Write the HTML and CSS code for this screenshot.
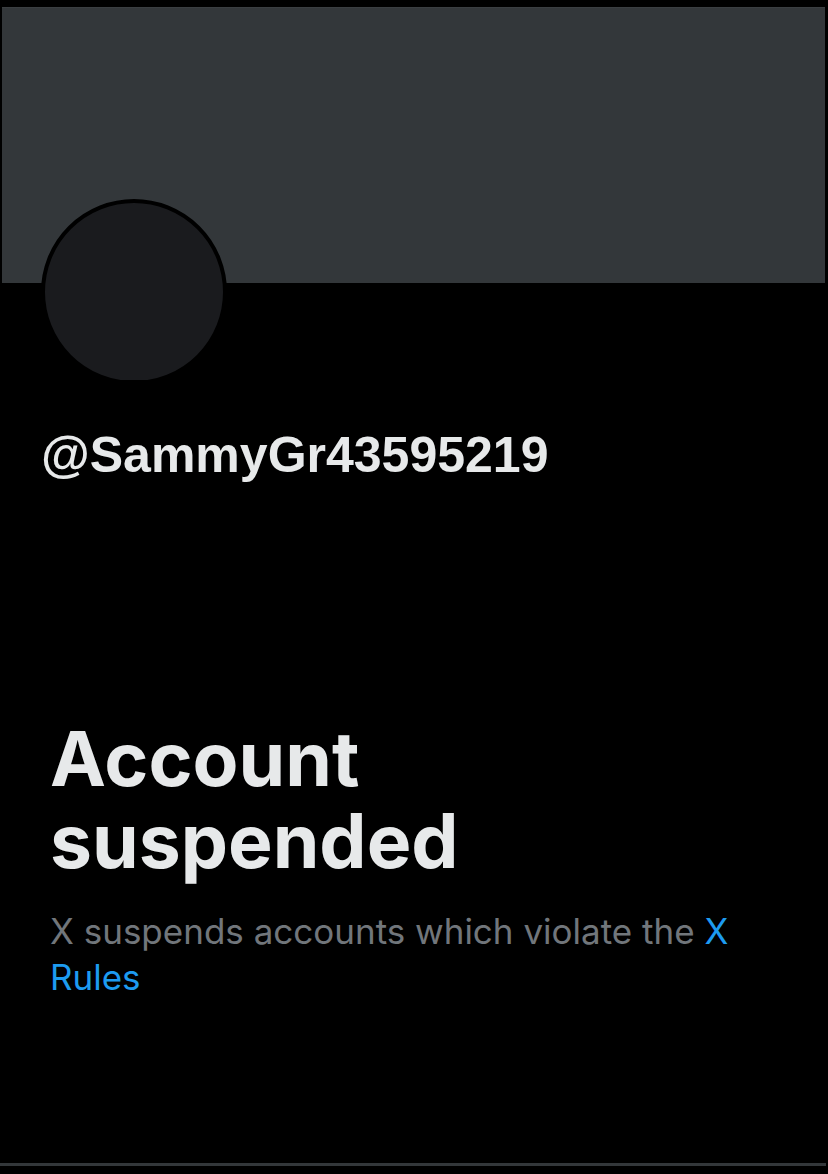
FILE: index.html
```html
<!DOCTYPE html>
<html lang="en">
<head>
<meta charset="utf-8">
<title>@SammyGr43595219</title>
<link rel="stylesheet" href="styles.css">
</head>
<body>
<div class="page">
  <div class="banner"></div>
  <div class="avatar-wrap">
    <div class="avatar"></div>
  </div>
  <div class="handle">@SammyGr43595219</div>
  <section class="notice">
    <h1 class="notice-title">Account suspended</h1>
    <p class="notice-text">X suspends accounts which violate the <a class="notice-link" href="#">X Rules</a></p>
  </section>
  <div class="bottom-rule"></div>
</div>
</body>
</html>
```

FILE: styles.css
```css
html, body {
  margin: 0;
  padding: 0;
  background: #000;
}

.page {
  width: 828px;
  height: 1174px;
  overflow: hidden;
  font-family: Inter, "Liberation Sans", sans-serif;
}

.banner {
  margin: 7px 0 0 2px;
  width: 823px;
  height: 276px;
  background: #33373a;
  border-top: 1px solid #3a3e41;
  box-sizing: border-box;
}

.avatar-wrap {
  margin: -84px 0 0 41px;
  width: 186px;
  height: 181px;
  overflow: hidden;
}

.avatar {
  width: 186px;
  height: 186px;
  border-radius: 50%;
  box-sizing: border-box;
  border: 4px solid #000;
  background: #1a1b1e;
}

.handle {
  margin-top: 45px;
  padding-left: 41px;
  font-family: "Liberation Sans", Arial, sans-serif;
  font-size: 50px;
  line-height: 60px;
  font-weight: 700;
  color: #e7e9ea;
}

.notice {
  margin-top: 233px;
  padding: 0 50px;
}

.notice-title {
  margin: 0;
  font-size: 75px;
  line-height: 82px;
  font-weight: 700;
  color: #e7e9ea;
  width: 520px;
}

.notice-text {
  margin: 26px 0 0;
  font-size: 35px;
  line-height: 46px;
  font-weight: 400;
  color: #71767b;
  max-width: 700px;
}

.notice-link {
  color: #1d9bf0;
  text-decoration: none;
}

.bottom-rule {
  margin-top: 163px;
  width: 826px;
  height: 3px;
  background: #33373a;
}
```
